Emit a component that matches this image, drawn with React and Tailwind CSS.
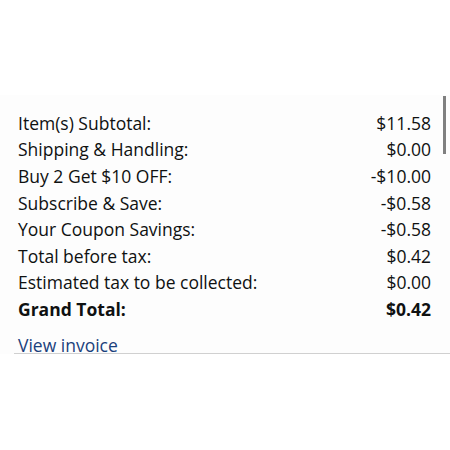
const rows = [
    { label: 'Item(s) Subtotal:', value: '$11.58' },
    { label: 'Shipping & Handling:', value: '$0.00' },
    { label: 'Buy 2 Get $10 OFF:', value: '-$10.00' },
    { label: 'Subscribe & Save:', value: '-$0.58' },
    { label: 'Your Coupon Savings:', value: '-$0.58' },
    { label: 'Total before tax:', value: '$0.42' },
    { label: 'Estimated tax to be collected:', value: '$0.00' },
    { label: 'Grand Total:', value: '$0.42', bold: true },
];

const App = () => {
    return (
        <div className="w-[450px] h-[450px] bg-white overflow-hidden" style={{ fontFamily: '"Open Sans", sans-serif' }}>
            <div className="mt-[95px] relative bg-[#fdfdfd]">
                {/* scrollbar */}
                <div className="absolute left-[443px] top-[1px] w-[3px] h-[58px] bg-[#808080]" />
                <div className="pl-[18px] pr-[19px] pt-[14.7px] flex flex-col">
                    {rows.map((row) => (
                        <div
                            key={row.label}
                            className={`flex justify-between items-center h-[26.6px] text-[17.5px] text-[#0f1111] ${row.bold ? 'font-bold' : ''}`}
                        >
                            <span>{row.label}</span>
                            <span>{row.value}</span>
                        </div>
                    ))}
                    <a className="mt-[14.5px] h-[16px] leading-[16px] text-[17.5px] text-[#1a407c]">View invoice</a>
                </div>
                <div className="ml-[14px] h-px bg-[#d0d0d0]" />
            </div>
        </div>
    );
};

export default App;
